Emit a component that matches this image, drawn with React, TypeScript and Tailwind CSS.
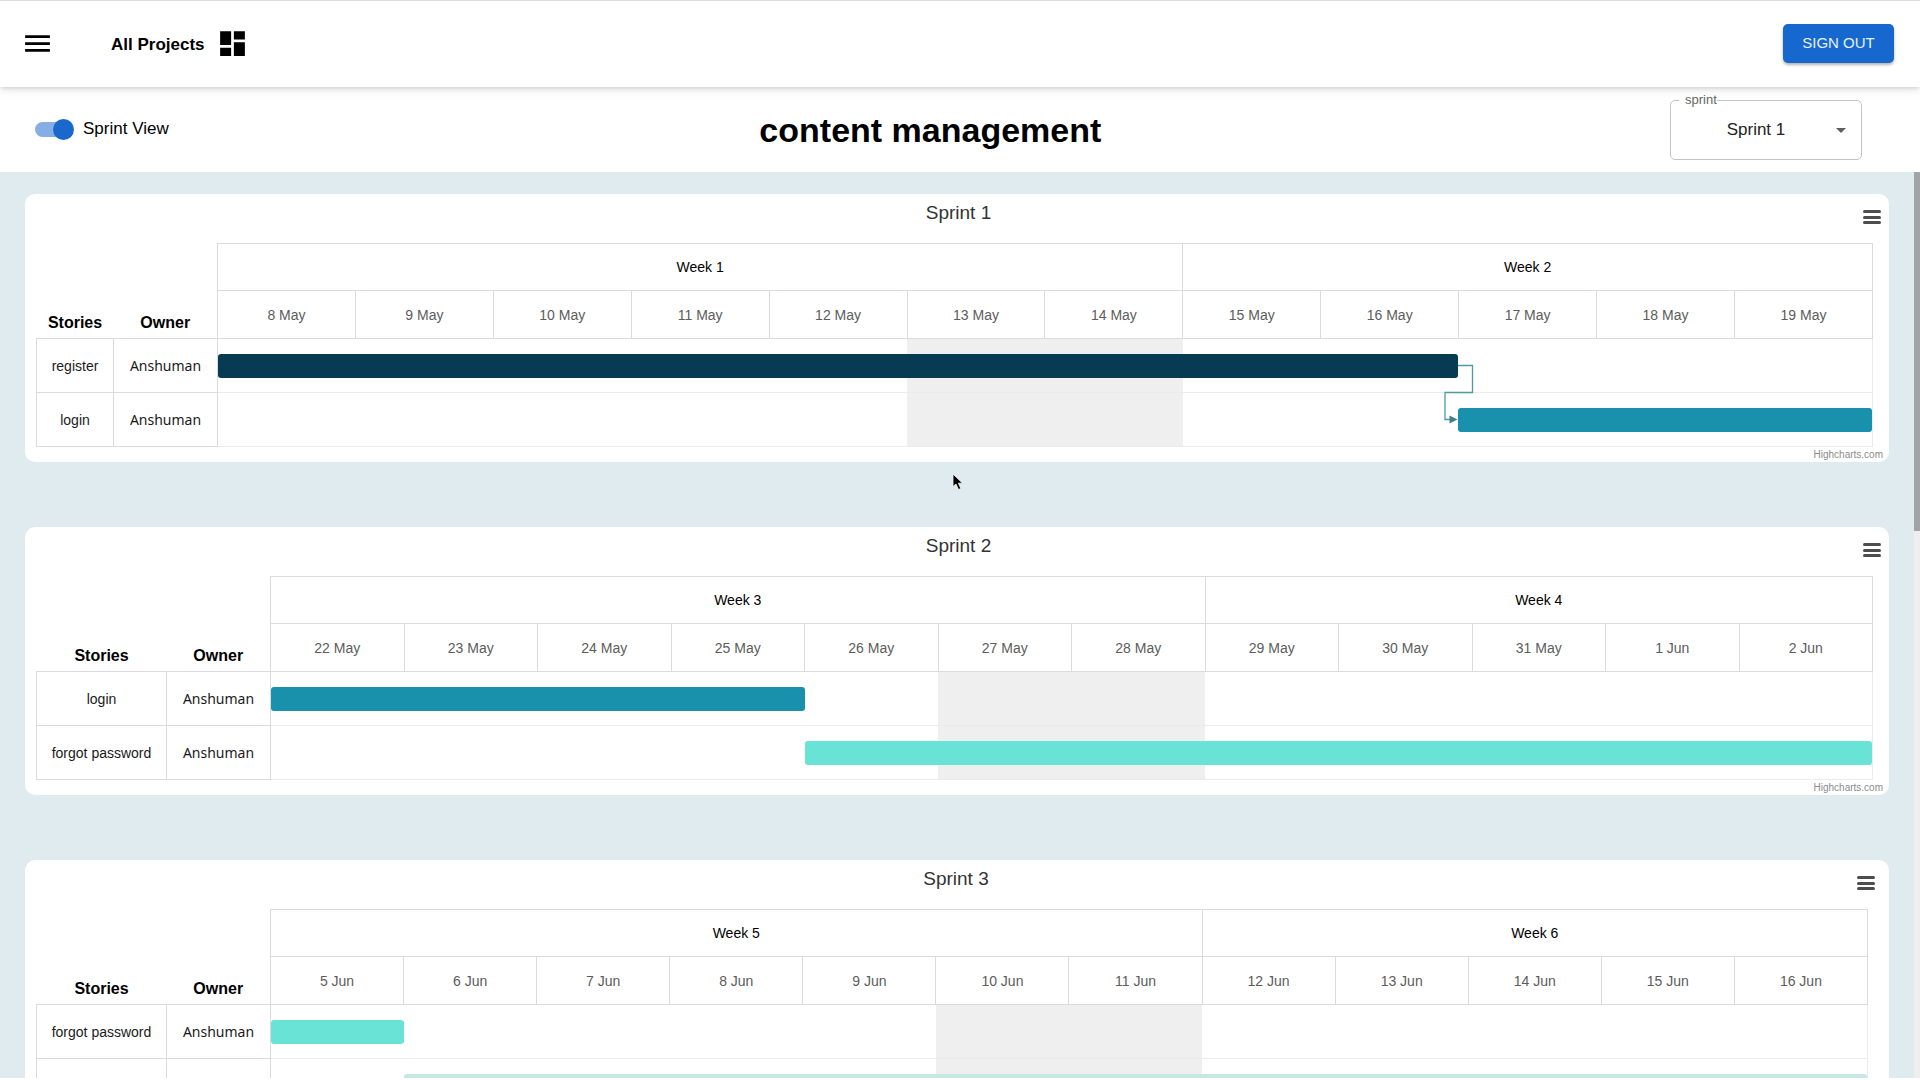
import { MdDashboard, MdMenu } from "react-icons/md";

type Story = {
  name: string;
  owner: string;
  start: number;
  days: number;
  color: string;
  linked?: boolean;
};

type Sprint = {
  title: string;
  weeks: [string, string];
  days: string[];
  storyCol: string;
  inset: string;
  menuInset: string;
  credits: boolean;
  rows: Story[];
};

const sprints: Sprint[] = [
  {
    title: "Sprint 1",
    weeks: ["Week 1", "Week 2"],
    days: ["8 May", "9 May", "10 May", "11 May", "12 May", "13 May", "14 May", "15 May", "16 May", "17 May", "18 May", "19 May"],
    storyCol: "w-[77px]",
    inset: "pr-4",
    menuInset: "right-2",
    credits: true,
    rows: [
      { name: "register", owner: "Anshuman", start: 1, days: 9, color: "bg-[#063b53]", linked: true },
      { name: "login", owner: "Anshuman", start: 10, days: 3, color: "bg-[#1990ac]" },
    ],
  },
  {
    title: "Sprint 2",
    weeks: ["Week 3", "Week 4"],
    days: ["22 May", "23 May", "24 May", "25 May", "26 May", "27 May", "28 May", "29 May", "30 May", "31 May", "1 Jun", "2 Jun"],
    storyCol: "w-[130px]",
    inset: "pr-4",
    menuInset: "right-2",
    credits: true,
    rows: [
      { name: "login", owner: "Anshuman", start: 1, days: 4, color: "bg-[#1990ac]" },
      { name: "forgot password", owner: "Anshuman", start: 5, days: 8, color: "bg-[#69e3d5]" },
    ],
  },
  {
    title: "Sprint 3",
    weeks: ["Week 5", "Week 6"],
    days: ["5 Jun", "6 Jun", "7 Jun", "8 Jun", "9 Jun", "10 Jun", "11 Jun", "12 Jun", "13 Jun", "14 Jun", "15 Jun", "16 Jun"],
    storyCol: "w-[130px]",
    inset: "pr-[21px]",
    menuInset: "right-[14px]",
    credits: false,
    rows: [
      { name: "forgot password", owner: "Anshuman", start: 1, days: 1, color: "bg-[#69e3d5]" },
      { name: "", owner: "", start: 2, days: 11, color: "bg-[#c6e7e6]" },
    ],
  },
];

function DependencyArrow() {
  return (
    <svg className="absolute top-3 -left-4 overflow-visible" width="30" height="58" viewBox="0 0 30 58" fill="none" aria-hidden="true">
      <path d="M16 14.500H30.500V41.500H3V68.500H8" stroke="#4f9a9f" strokeWidth="1.300" />
      <path d="M7.500 64.500V72.500L15.500 68.500Z" fill="#3f8088" />
    </svg>
  );
}

function TimelineRow({ story }: { story: Story }) {
  return (
    <tr className="h-[54px]">
      <td className="border border-[#d9dae2] p-0 text-center text-sm text-[#1a1a1a]">{story.name}</td>
      <td className="border border-[#d9dae2] p-0 text-center font-['Noto_Sans',sans-serif] text-sm text-[#1a1a1a]">{story.owner}</td>
      <td colSpan={12} className="border border-[#ebebeb] border-l-[#d9dae2] p-0">
        <div className="grid h-[53px] grid-cols-12 items-center">
          <div className="col-start-6 col-end-8 row-start-1 h-full bg-[#efefef]" />
          <div
            className={"row-start-1 h-6 rounded-[3px] " + story.color}
            style={{ gridColumn: `${story.start} / span ${story.days}` }}
          />
          {story.linked && (
            <div className="relative col-start-10 row-start-1 h-full">
              <DependencyArrow />
            </div>
          )}
        </div>
      </td>
    </tr>
  );
}

function SprintCard({ sprint }: { sprint: Sprint }) {
  return (
    <section className={"relative shrink-0 rounded-[10px] bg-white pl-[11px] " + sprint.inset}>
      <div className="flex h-[49px] justify-center pt-[7px] pl-2">
        <h2 className="text-[19px] leading-6 text-[#333333]">{sprint.title}</h2>
      </div>
      <button
        aria-label={sprint.title + " chart menu"}
        className={"absolute top-4 flex h-[14px] w-[18px] flex-col justify-between " + sprint.menuInset}
      >
        <span className="h-[3px] w-full rounded-xs bg-[#4d4d4d]" />
        <span className="h-[3px] w-full rounded-xs bg-[#4d4d4d]" />
        <span className="h-[3px] w-full rounded-xs bg-[#4d4d4d]" />
      </button>
      <table className="w-full table-fixed border-collapse">
        <colgroup>
          <col className={sprint.storyCol} />
          <col className="w-[104px]" />
          {sprint.days.map((d) => (
            <col key={d} />
          ))}
        </colgroup>
        <thead>
          <tr className="h-[47px]">
            <th rowSpan={2} scope="col" className="p-0 pb-[3px] text-center align-bottom text-base font-bold text-black">
              Stories
            </th>
            <th rowSpan={2} scope="col" className="p-0 pb-[3px] text-center align-bottom text-base font-bold text-black">
              Owner
            </th>
            <th colSpan={7} scope="colgroup" className="border border-[#d9dae2] p-0 text-sm font-normal text-black">
              {sprint.weeks[0]}
            </th>
            <th colSpan={5} scope="colgroup" className="border border-[#d9dae2] p-0 text-sm font-normal text-black">
              {sprint.weeks[1]}
            </th>
          </tr>
          <tr className="h-12">
            {sprint.days.map((d) => (
              <th key={d} scope="col" className="border border-[#d9dae2] p-0 text-sm font-normal text-[#5c5c5c]">
                {d}
              </th>
            ))}
          </tr>
        </thead>
        <tbody>
          {sprint.rows.map((row, i) => (
            <TimelineRow key={i} story={row} />
          ))}
        </tbody>
      </table>
      <div className="-mr-[10px] flex h-[15px] items-center justify-end text-[10px] leading-none text-[#8c8c8c]">
        {sprint.credits && <a href="#highcharts">Highcharts.com</a>}
      </div>
    </section>
  );
}

export default function App() {
  return (
    <div className="relative flex h-screen flex-col overflow-hidden bg-white font-['Liberation_Sans',Arial,sans-serif] text-black">
      <header className="relative z-10 flex h-[87px] shrink-0 items-center border-t border-[#dedede] bg-white pr-[26px] pb-px pl-[21px] shadow-[0_2px_4px_-1px_rgba(0,0,0,0.14),0_4px_8px_rgba(0,0,0,0.08)]">
        <button aria-label="Open menu">
          <MdMenu size={33} />
        </button>
        <a href="#projects" className="ml-[57px] flex items-center gap-[11px] text-[17px] font-bold">
          <span className="pt-0.5">All Projects</span>
          <MdDashboard size={33} />
        </a>
        <button className="ml-auto h-[39px] w-[111px] rounded-[5px] bg-[#1668ce] text-[15px] text-[#e4f2ff] shadow-[0_2px_3px_rgba(0,0,0,0.3)]">
          SIGN OUT
        </button>
      </header>

      <div className="flex h-[85px] shrink-0 items-center justify-between pr-[58px] pl-[35px]">
        <label className="mr-[22px] flex items-center gap-[9px] text-[17px]">
          <input
            type="checkbox"
            defaultChecked
            className="relative mr-1 h-[15px] w-[35px] appearance-none rounded-full bg-[#86aee6] before:absolute before:-top-[3px] before:left-[18px] before:size-[21px] before:rounded-full before:bg-[#1a68cc] before:content-['']"
          />
          <span className="pb-0.5">Sprint View</span>
        </label>
        <h1 className="text-[34px] leading-10 font-bold">content management</h1>
        <div className="relative h-[60px] w-[192px]">
          <label htmlFor="sprint" className="absolute -top-2 left-[9px] bg-white pl-1.5 text-[13px] leading-4 text-[#666666]">
            sprint
          </label>
          <select
            id="sprint"
            defaultValue="Sprint 1"
            className="h-full w-full appearance-none rounded-[5px] border border-[#c4c4c4] bg-transparent pr-5 text-center text-[17px] text-[#222222] [text-align-last:center]"
          >
            <option>Sprint 1</option>
            <option>Sprint 2</option>
            <option>Sprint 3</option>
          </select>
          <svg className="pointer-events-none absolute top-7 right-4" width="10" height="5" viewBox="0 0 10 5" aria-hidden="true">
            <path d="M0 0H10L5 5Z" fill="#5e5e5e" />
          </svg>
        </div>
      </div>

      <div className="mb-0.5 flex min-h-0 flex-1 bg-[#e0ebef]">
        <main className="flex min-w-0 flex-1 flex-col gap-[65px] overflow-hidden pt-[22px] pr-[25px] pl-[25px]">
          {sprints.map((s) => (
            <SprintCard key={s.title} sprint={s} />
          ))}
        </main>
        <div className="w-1.5 bg-[#efeeef]">
          <div className="h-[359px] bg-[#a0a4a6]" />
        </div>
      </div>

      <svg className="pointer-events-none absolute top-[473px] left-[952px] z-20" width="14" height="20" viewBox="0 0 14 20" aria-hidden="true">
        <path d="M1 1V13.500L4 11L6.500 16.500L8.800 15.500L6.400 10.200H10.500Z" fill="#000" stroke="#f2f6f8" strokeWidth="0.800" />
      </svg>
    </div>
  );
}
